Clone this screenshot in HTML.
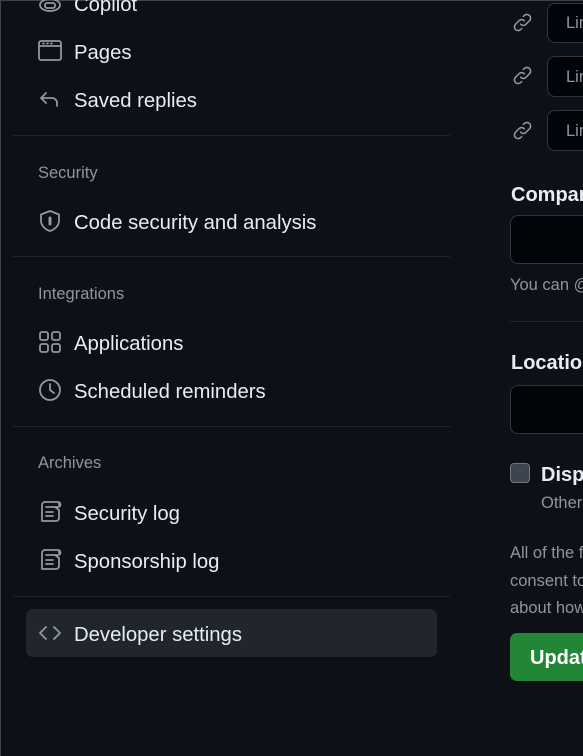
<!DOCTYPE html>
<html style="overflow:hidden"><head><meta charset="utf-8"><style>
*{margin:0;padding:0;box-sizing:border-box}
body{width:583px;height:756px;background:#0d1117;overflow:hidden;position:relative;font-family:"Liberation Sans",sans-serif;color:#e6edf3}
#w{position:absolute;left:0;top:0;width:583px;height:756px;overflow:hidden}
.a{position:absolute;white-space:nowrap}
.it{font-size:20.3px;line-height:24px;left:74px}
.h{font-size:16.5px;line-height:20px;left:38px;color:#8d96a0}
.ic{position:absolute;left:38px;width:24px;height:24px}
.dv{position:absolute;left:13px;width:437px;height:1px;background:#21262d}
svg{fill:none;stroke:#9198a1;stroke-width:1.8;stroke-linecap:round;stroke-linejoin:round}
.inp{position:absolute;background:#010409;border:1px solid #30363d;border-radius:8px}
.mut{color:#8d96a0;font-size:16.5px;line-height:20px}
.b{font-size:20px;font-weight:bold;line-height:24px}
</style></head><body><div id="w">
<div class="a" style="left:0;top:0;width:583px;height:1px;background:#3d444d"></div>
<div class="a" style="left:0;top:0;width:1px;height:756px;background:#3d444d"></div>

<svg class="ic" style="top:-8px" viewBox="0 0 24 24"><ellipse cx="12" cy="13" rx="10" ry="6"/><rect x="7" y="11" width="10" height="5" rx="2"/></svg>
<div class="a it" style="top:-7px">Copilot</div>

<svg class="ic" style="top:39px" viewBox="0 0 24 24"><rect x="1" y="2" width="22" height="19" rx="2"/><path d="M1 7h22M5 4.5h1M9 4.5h1M13 4.5h1"/></svg>
<div class="a it" style="top:41px">Pages</div>

<svg class="ic" style="top:87px" viewBox="0 0 24 24"><path d="M8 6L3 11l5 5M3 11h11a5 5 0 0 1 5 5v3"/></svg>
<div class="a it" style="top:89px">Saved replies</div>

<div class="dv" style="top:135px"></div>
<div class="a h" style="top:163px">Security</div>
<svg class="ic" style="top:209px" viewBox="0 0 24 24"><path d="M12 2L3 5.5v6c0 5 4 9 9 10.5 5-1.5 9-5.5 9-10.5v-6z"/><path d="M12 9v6" stroke-width="3"/></svg>
<div class="a it" style="top:211px">Code security and analysis</div>

<div class="dv" style="top:256px"></div>
<div class="a h" style="top:284px">Integrations</div>
<svg class="ic" style="top:330px" viewBox="0 0 24 24"><rect x="2" y="2" width="8" height="8" rx="2"/><rect x="14" y="2" width="8" height="8" rx="2"/><rect x="2" y="14" width="8" height="8" rx="2"/><rect x="14" y="14" width="8" height="8" rx="2"/></svg>
<div class="a it" style="top:332px">Applications</div>
<svg class="ic" style="top:378px" viewBox="0 0 24 24"><circle cx="12" cy="12" r="10"/><path d="M12 6v6l4 3"/></svg>
<div class="a it" style="top:380px">Scheduled reminders</div>

<div class="dv" style="top:426px"></div>
<div class="a h" style="top:453px">Archives</div>
<svg class="ic" style="top:500px" viewBox="0 0 24 24"><path d="M4 21V5a3 3 0 0 1 3-3h14v3M4 21h14a3 3 0 0 0 3-3v-8l-4-3M20 2a2 2 0 0 1 0 5H8M8 12h7M8 16h7"/></svg>
<div class="a it" style="top:502px">Security log</div>
<svg class="ic" style="top:548px" viewBox="0 0 24 24"><path d="M4 21V5a3 3 0 0 1 3-3h14v3M4 21h14a3 3 0 0 0 3-3v-8l-4-3M20 2a2 2 0 0 1 0 5H8M8 12h7M8 16h7"/></svg>
<div class="a it" style="top:550px">Sponsorship log</div>

<div class="dv" style="top:596px"></div>
<div class="a" style="left:26px;top:609px;width:411px;height:48px;background:#21262d;border-radius:7px"></div>
<svg class="ic" style="top:621px" viewBox="0 0 24 24"><path d="M8 6l-6 6 6 6M16 6l6 6-6 6"/></svg>
<div class="a it" style="top:623px">Developer settings</div>

<svg class="ic" style="left:512px;top:12px;width:21px;height:21px" viewBox="0 0 24 24"><path d="M10 14a4 4 0 0 0 6 0l4-4a4 4 0 0 0-6-6l-1 1M14 10a4 4 0 0 0-6 0l-4 4a4 4 0 0 0 6 6l1-1"/></svg>
<svg class="ic" style="left:512px;top:65px;width:21px;height:21px" viewBox="0 0 24 24"><path d="M10 14a4 4 0 0 0 6 0l4-4a4 4 0 0 0-6-6l-1 1M14 10a4 4 0 0 0-6 0l-4 4a4 4 0 0 0 6 6l1-1"/></svg>
<svg class="ic" style="left:512px;top:120px;width:21px;height:21px" viewBox="0 0 24 24"><path d="M10 14a4 4 0 0 0 6 0l4-4a4 4 0 0 0-6-6l-1 1M14 10a4 4 0 0 0-6 0l-4 4a4 4 0 0 0 6 6l1-1"/></svg>
<div class="inp" style="left:547px;top:3px;width:60px;height:40px"></div>
<div class="a mut" style="left:566px;top:13px">Link</div>
<div class="inp" style="left:547px;top:56px;width:60px;height:41px"></div>
<div class="a mut" style="left:566px;top:67px">Link</div>
<div class="inp" style="left:547px;top:110px;width:60px;height:41px"></div>
<div class="a mut" style="left:566px;top:121px">Link</div>

<div class="a b" style="left:511px;top:183px">Company</div>
<div class="inp" style="left:510px;top:215px;width:100px;height:49px"></div>
<div class="a mut" style="left:510px;top:275px">You can @mention</div>
<div class="a" style="left:510px;top:321px;width:80px;height:1px;background:#21262d"></div>
<div class="a b" style="left:511px;top:351px">Location</div>
<div class="inp" style="left:510px;top:385px;width:100px;height:49px"></div>

<div class="a" style="left:510px;top:463px;width:20px;height:20px;background:#3d444d;border:1px solid #6e7681;border-radius:4px"></div>
<div class="a b" style="left:541px;top:463px">Display</div>
<div class="a mut" style="left:541px;top:493px">Others</div>
<div class="a mut" style="left:510px;top:543px">All of the fields</div>
<div class="a mut" style="left:510px;top:571px">consent to</div>
<div class="a mut" style="left:510px;top:598px">about how</div>
<div class="a" style="left:510px;top:633px;width:90px;height:48px;background:#238636;border-radius:7px"></div>
<div class="a b" style="left:530px;top:646px;color:#fff">Update</div>
</div></body></html>
